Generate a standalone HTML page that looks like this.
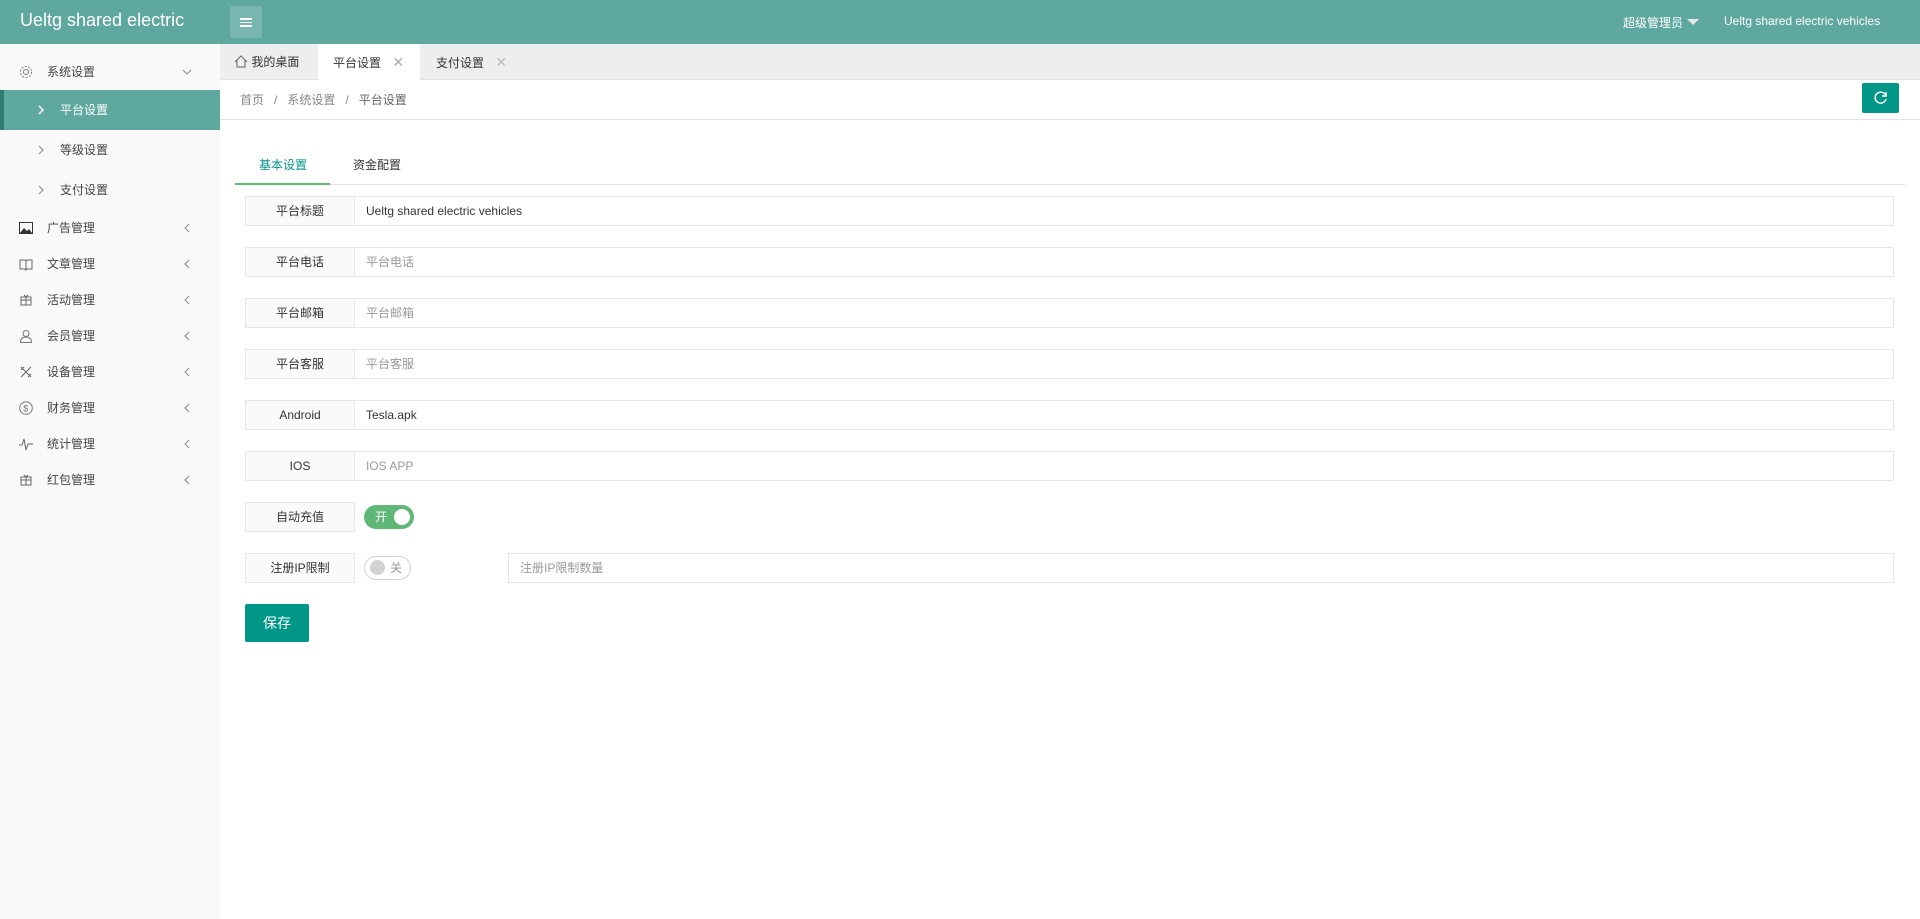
<!DOCTYPE html>
<html><head><meta charset="utf-8"><style>
*{margin:0;padding:0;box-sizing:border-box}
body{width:1920px;height:919px;overflow:hidden;font-family:"Liberation Sans","Noto Sans CJK SC",sans-serif;font-size:12px;color:#333;background:#fff;position:relative}
.hd{position:absolute;left:0;top:0;width:1920px;height:44px;background:#5ea8a0;color:#fff}
.logo{position:absolute;left:20px;top:10px;font-size:18px}
.ham{position:absolute;left:230px;top:6px;width:32px;height:32px;background:#78b7b0;border-radius:2px}
.ham i{position:absolute;left:10px;width:12px;height:1.5px;background:#fff}
.hr1{position:absolute;left:1623px;top:14px;font-size:12px}
.tri{display:inline-block;border:6px solid transparent;border-top:6px solid #e6e6e6;vertical-align:-4px;margin-left:4px}
.hr2{position:absolute;left:1724px;top:14px;font-size:12px}
.sb{position:absolute;left:0;top:44px;width:220px;height:875px;background:#f9f9f9}
.it{position:absolute;left:0;width:220px;height:36px;line-height:36px;color:#444}
.it .ic{position:absolute;left:19px;top:11px;width:14px;height:14px}
.it .tx{position:absolute;left:47px}
.it .ar{position:absolute;left:182px;top:13px;width:10px;height:10px}
.sub .tx{left:60px}.sub .ar{left:36px}
.act{background:#5ea8a0;color:#fff;border-left:4px solid #2f7d72}
.tb{position:absolute;left:220px;top:44px;width:1700px;height:36px;background:#eeeef0;border-bottom:1px solid #e2e2e2}
.tab{position:absolute;top:0;height:36px;line-height:36px}
.bc{position:absolute;left:240px;top:91px;color:#888}
.bc b{font-weight:normal;color:#666}
.line1{position:absolute;left:220px;top:119px;width:1700px;height:1px;background:#e2e2e2}
.rf{position:absolute;left:1862px;top:83px;width:37px;height:30px;background:#009688;border-radius:2px}
.ct{position:absolute;top:156px}
.tline{position:absolute;left:235px;top:184px;width:1670px;height:1px;background:#e2e2e2}
.ul{position:absolute;left:235px;top:183px;width:95px;height:2px;background:#5fb878}
.row{position:absolute;left:245px;height:30px}
.lb{position:absolute;left:0;top:0;width:110px;height:30px;border:1px solid #e6e6e6;background:#fafafa;text-align:center;line-height:28px}
.in{position:absolute;left:109px;top:0;width:1540px;height:30px;border:1px solid #e6e6e6;line-height:28px;padding-left:11px;color:#333}
.ph{color:#999}
.sw{position:absolute;border-radius:14px;height:24px}
.save{position:absolute;left:245px;top:604px;width:64px;height:38px;background:#009688;color:#fff;font-size:14px;text-align:center;line-height:38px;border-radius:2px}
</style></head><body>
<div class="hd"><div class="logo">Ueltg shared electric</div>
<div class="ham"><i style="top:12px"></i><i style="top:15.5px"></i><i style="top:19px"></i></div>
<div class="hr1">超级管理员<span class="tri"></span></div>
<div class="hr2">Ueltg shared electric vehicles</div></div>

<div class="sb">
<div class="it" style="top:10px"><svg class="ic" viewBox="0 0 14 14" fill="none" stroke="#777"><circle cx="7" cy="7" r="2.5"/><circle cx="7" cy="7" r="5.5" stroke-dasharray="2 1.5"/></svg><span class="tx">系统设置</span><svg class="ar" viewBox="0 0 10 10" fill="none" stroke="#888"><path d="M1 3l4 4 4-4"/></svg></div>
<div class="it sub act" style="top:46px;height:40px;line-height:40px"><svg class="ar" style="left:32px;top:15px" viewBox="0 0 10 10" fill="none" stroke="#fff" stroke-width="1.5"><path d="M3 1l4 4-4 4"/></svg><span class="tx" style="left:56px;color:#fff">平台设置</span></div>
<div class="it sub" style="top:88px"><svg class="ar" viewBox="0 0 10 10" fill="none" stroke="#888"><path d="M3 1l4 4-4 4"/></svg><span class="tx">等级设置</span></div>
<div class="it sub" style="top:128px"><svg class="ar" viewBox="0 0 10 10" fill="none" stroke="#888"><path d="M3 1l4 4-4 4"/></svg><span class="tx">支付设置</span></div>
<div class="it" style="top:166px"><svg class="ic" viewBox="0 0 14 14"><rect x="0.5" y="1.5" width="13" height="11" fill="none" stroke="#333"/><path d="M1 12l4-5 3 3 2-2 3 4z" fill="#333"/></svg><span class="tx">广告管理</span><svg class="ar" viewBox="0 0 10 10" fill="none" stroke="#888"><path d="M7 1L3 5l4 4"/></svg></div>
<div class="it" style="top:202px"><svg class="ic" viewBox="0 0 14 14" fill="none" stroke="#666"><path d="M1 3v9h5l1 1 1-1h5V3H8L7 4 6 3z M7 4v9"/></svg><span class="tx">文章管理</span><svg class="ar" viewBox="0 0 10 10" fill="none" stroke="#888"><path d="M7 1L3 5l4 4"/></svg></div>
<div class="it" style="top:238px"><svg class="ic" viewBox="0 0 14 14" fill="none" stroke="#666"><rect x="2" y="4" width="10" height="8"/><path d="M2 7h10M7 4v8M5 2l2 2 2-2"/></svg><span class="tx">活动管理</span><svg class="ar" viewBox="0 0 10 10" fill="none" stroke="#888"><path d="M7 1L3 5l4 4"/></svg></div>
<div class="it" style="top:274px"><svg class="ic" viewBox="0 0 14 14" fill="none" stroke="#777"><circle cx="7" cy="4.5" r="3"/><path d="M1.5 13.5c0-4 2.5-5.5 5.5-5.5s5.5 1.5 5.5 5.5z"/></svg><span class="tx">会员管理</span><svg class="ar" viewBox="0 0 10 10" fill="none" stroke="#888"><path d="M7 1L3 5l4 4"/></svg></div>
<div class="it" style="top:310px"><svg class="ic" viewBox="0 0 14 14" fill="none" stroke="#666"><path d="M2 2l10 10M12 2L2 12M2 5l3-3M9 12l3-3"/></svg><span class="tx">设备管理</span><svg class="ar" viewBox="0 0 10 10" fill="none" stroke="#888"><path d="M7 1L3 5l4 4"/></svg></div>
<div class="it" style="top:346px"><svg class="ic" viewBox="0 0 14 14" fill="none" stroke="#777"><circle cx="7" cy="7" r="6.3"/><text x="4.3" y="10.5" font-size="9" fill="#777" stroke="none" font-family="Liberation Sans">$</text></svg><span class="tx">财务管理</span><svg class="ar" viewBox="0 0 10 10" fill="none" stroke="#888"><path d="M7 1L3 5l4 4"/></svg></div>
<div class="it" style="top:382px"><svg class="ic" viewBox="0 0 14 14" fill="none" stroke="#666"><path d="M0 8h3l2-6 2 11 2-6h5"/></svg><span class="tx">统计管理</span><svg class="ar" viewBox="0 0 10 10" fill="none" stroke="#888"><path d="M7 1L3 5l4 4"/></svg></div>
<div class="it" style="top:418px"><svg class="ic" viewBox="0 0 14 14" fill="none" stroke="#666"><rect x="2" y="4" width="10" height="8"/><path d="M2 7h10M7 4v8M5 2l2 2 2-2"/></svg><span class="tx">红包管理</span><svg class="ar" viewBox="0 0 10 10" fill="none" stroke="#888"><path d="M7 1L3 5l4 4"/></svg></div>
</div>

<div class="tb">
<div class="tab" style="left:14px"><svg width="14" height="13" viewBox="0 0 14 13" style="vertical-align:-2px" fill="none" stroke="#666"><path d="M1 7L7 1l6 6M3 5v7h8V5"/></svg> 我的桌面</div>
<div class="tab" style="left:98px;width:102px;background:#fff;padding-left:15px">平台设置 <span style="color:#aaa;margin-left:8px;font-size:14px">✕</span></div>
<div class="tab" style="left:216px">支付设置 <span style="color:#bbb;margin-left:8px;font-size:14px">✕</span></div>
</div>
<div class="bc">首页 &nbsp;&nbsp;/&nbsp;&nbsp; 系统设置 &nbsp;&nbsp;/&nbsp;&nbsp; <b>平台设置</b></div>
<div class="line1"></div>
<div class="rf"><svg width="37" height="30" viewBox="0 0 37 30" fill="none" stroke="#fff" stroke-width="1.5"><path d="M23.5 12a5.5 5.5 0 1 0 0.5 4"/><path d="M24 9v4h-4"/></svg></div>

<div class="ct" style="left:259px;color:#009688">基本设置</div>
<div class="ct" style="left:353px">资金配置</div>
<div class="tline"></div><div class="ul"></div>

<div class="row" style="top:196px"><div class="lb">平台标题</div><div class="in">Ueltg shared electric vehicles</div></div>
<div class="row" style="top:247px"><div class="lb">平台电话</div><div class="in ph">平台电话</div></div>
<div class="row" style="top:298px"><div class="lb">平台邮箱</div><div class="in ph">平台邮箱</div></div>
<div class="row" style="top:349px"><div class="lb">平台客服</div><div class="in ph">平台客服</div></div>
<div class="row" style="top:400px"><div class="lb">Android</div><div class="in">Tesla.apk</div></div>
<div class="row" style="top:451px"><div class="lb">IOS</div><div class="in ph">IOS APP</div></div>
<div class="row" style="top:502px"><div class="lb">自动充值</div></div>
<div class="sw" style="left:364px;top:505px;width:50px;background:#5fb878;color:#fff;line-height:24px;padding-left:11px">开<span style="position:absolute;right:4px;top:4px;width:16px;height:16px;border-radius:50%;background:#fff"></span></div>
<div class="row" style="top:553px"><div class="lb">注册IP限制</div></div>
<div class="sw" style="left:364px;top:556px;width:47px;border:1px solid #d2d2d2;color:#999;line-height:22px;padding-left:25px"><span style="position:absolute;left:5px;top:3px;width:15px;height:15px;border-radius:50%;background:#d2d2d2"></span>关</div>
<div class="in ph" style="position:absolute;left:508px;top:553px;width:1386px">注册IP限制数量</div>
<div class="save">保存</div>
</body></html>
